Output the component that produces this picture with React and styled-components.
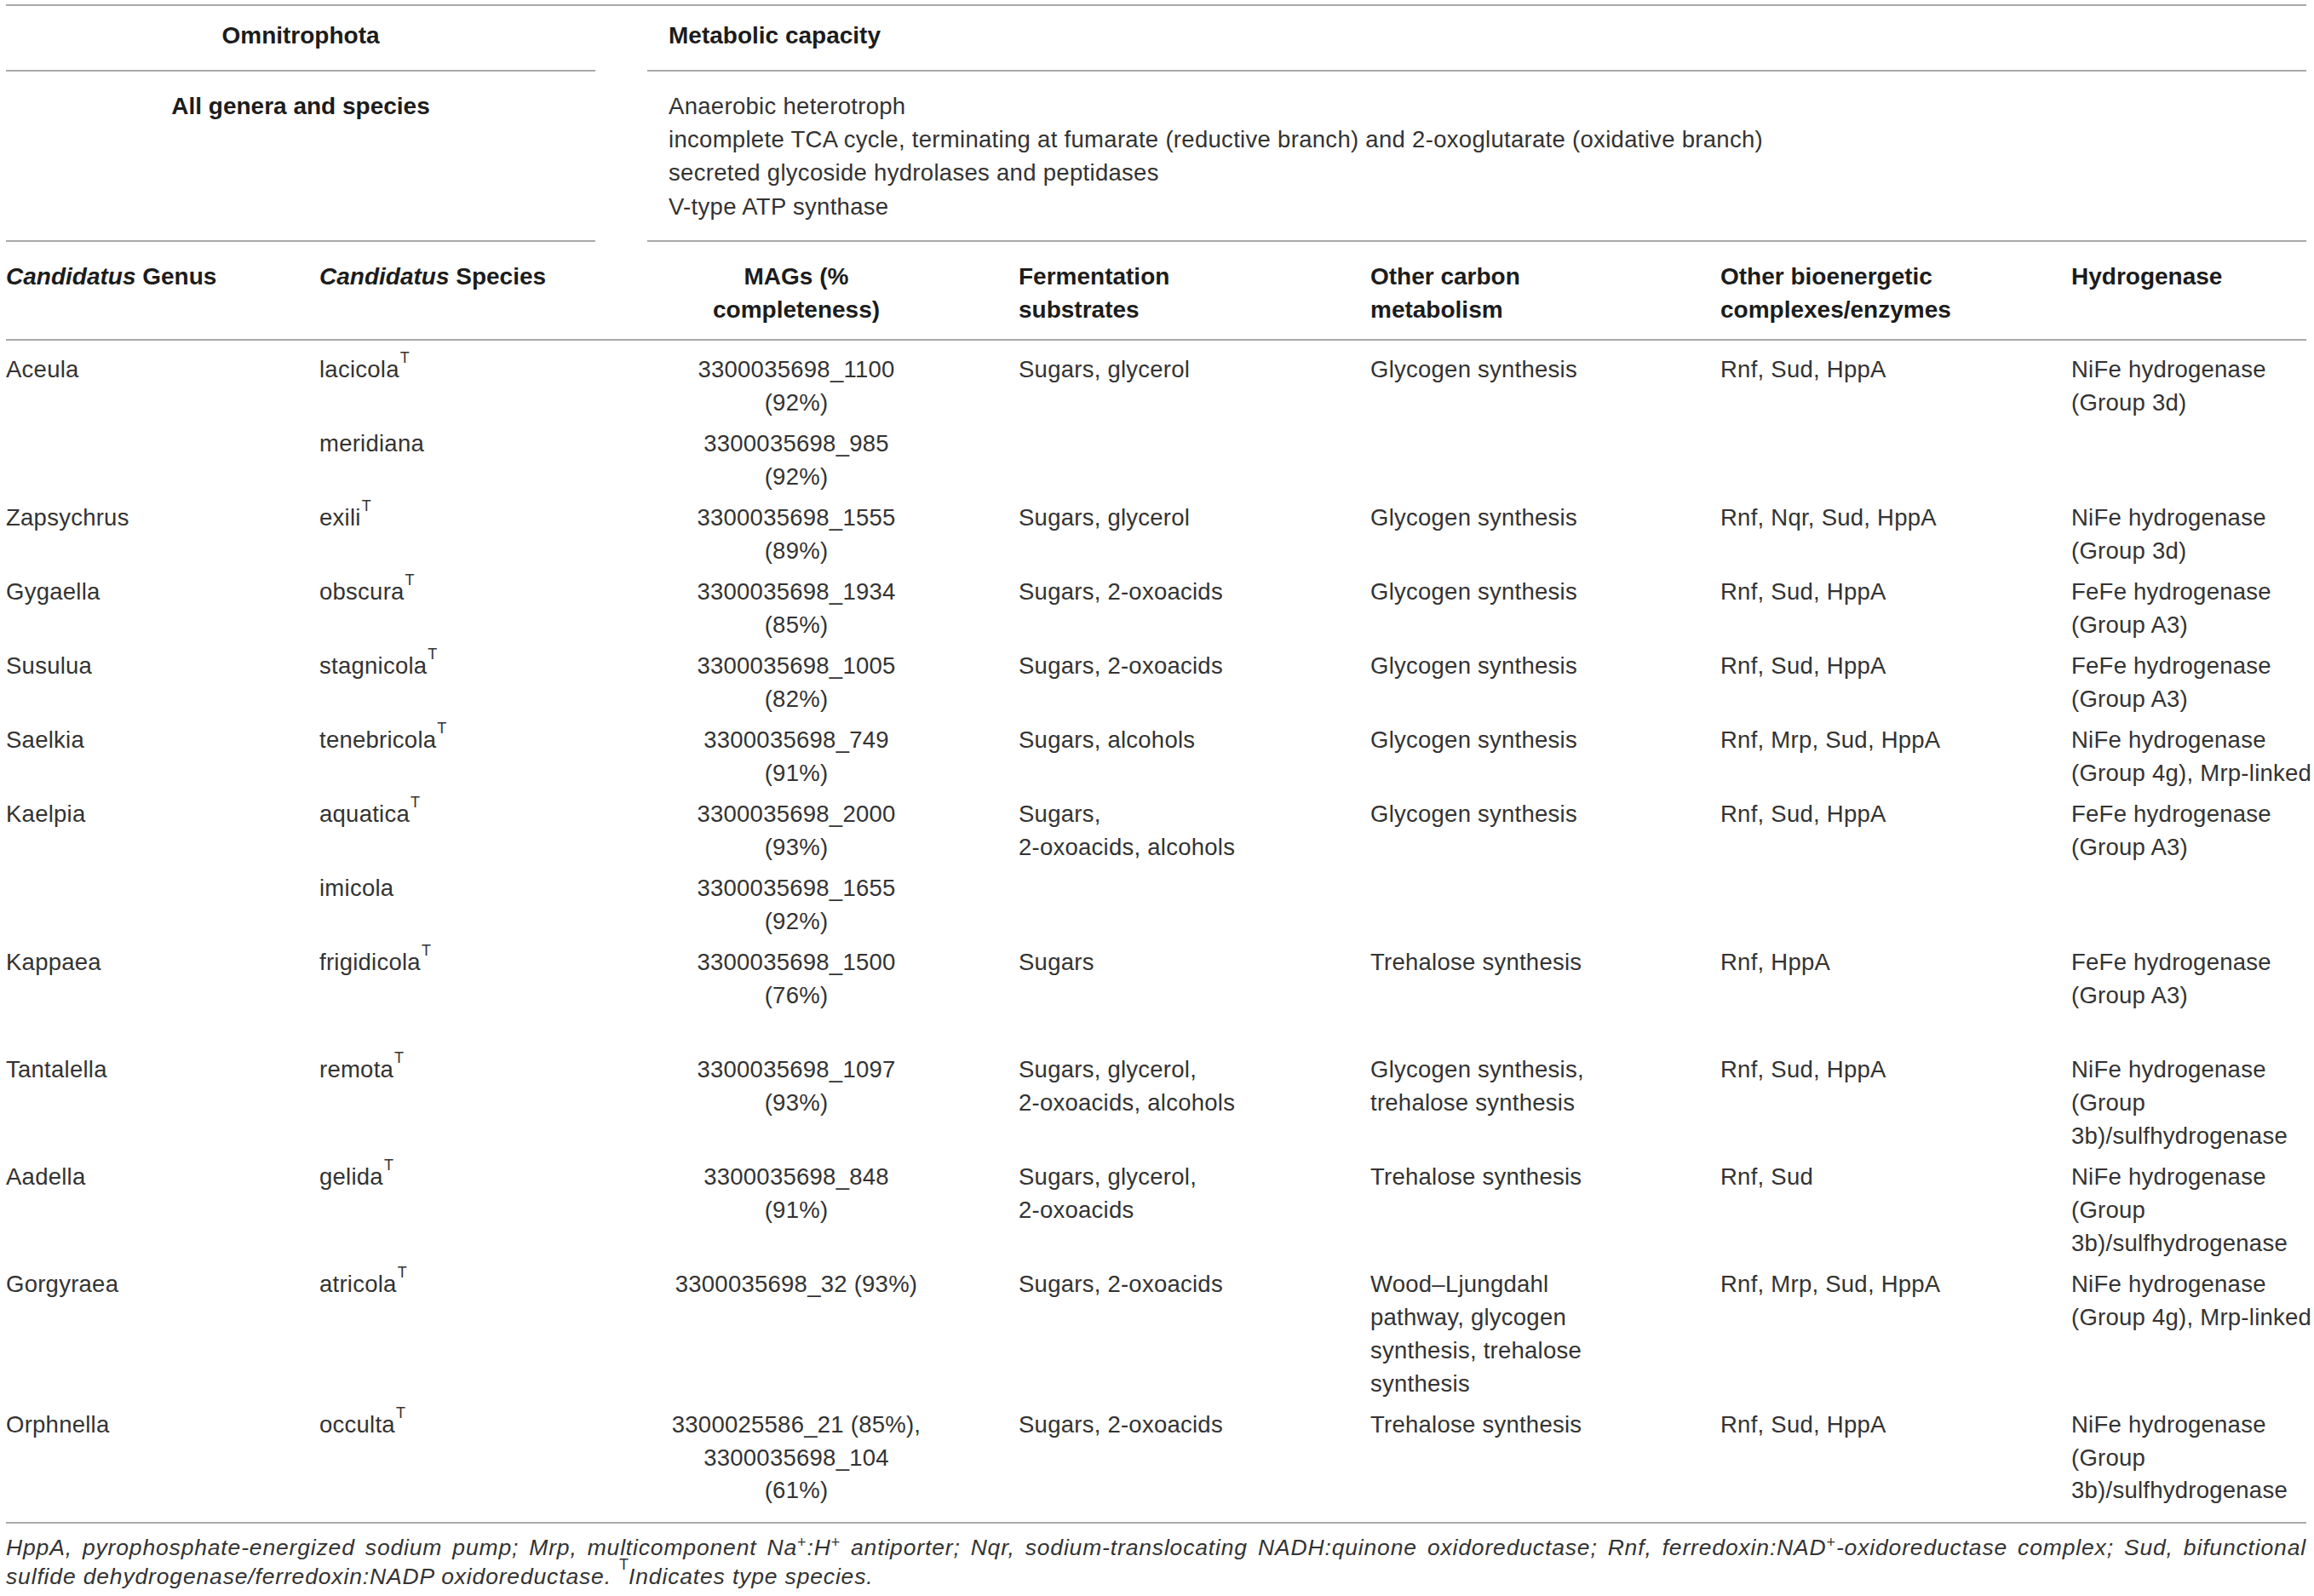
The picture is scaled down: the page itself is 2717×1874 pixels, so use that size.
import React from 'react';
import styled, { createGlobalStyle } from 'styled-components';

const Global = createGlobalStyle`
  html, body { margin: 0; padding: 0; background: #ffffff; }
  body {
    font-family: "Liberation Sans", Arial, Helvetica, sans-serif;
    color: #333333;
    -webkit-font-smoothing: antialiased;
  }
`;

const RULE = '2px solid #a9a9a9';
const COLS = '368px 385px 436px 413px 411px 412px 276px';

const Page = styled.div`
  width: 2701px;
  margin: 0 0 0 7px;
  padding-top: 5px;
  font-size: 27.5px;
  letter-spacing: 0.25px;
`;

const Table = styled.div`
  border-top: ${RULE};
`;

const GroupGrid = styled.div`
  display: grid;
  grid-template-columns: 692px 1948px;
  column-gap: 61px;
`;

const GroupCell = styled.div`
  border-bottom: ${RULE};
  padding: ${p => p.$pad};
  padding-left: ${p => (p.$center ? '0' : '25px')};
  text-align: ${p => (p.$center ? 'center' : 'left')};
  font-weight: ${p => (p.$bold ? 700 : 400)};
  font-size: ${p => (p.$bold ? '28px' : '27.5px')};
  letter-spacing: ${p => (p.$bold ? '0' : '0.3px')};
  color: ${p => (p.$bold ? '#1c1c1c' : '#333333')};
  line-height: ${p => p.$lh};
`;

const Line = styled.span`
  display: block;
  white-space: nowrap;
`;

const HeadGrid = styled.div`
  display: grid;
  grid-template-columns: ${COLS};
  border-bottom: ${RULE};
  padding: 21px 0 15px;
  font-weight: 700;
  font-size: 28px;
  letter-spacing: 0;
  line-height: 39px;
  color: #1c1c1c;
`;

const Body = styled.div`
  padding: 10px 0 12px;
  border-bottom: ${RULE};
`;

const Row = styled.div`
  display: grid;
  grid-template-columns: ${COLS};
  padding: 4.75px 0;
  line-height: 38.8px;
  min-height: ${p => (p.$lines ? `${p.$lines * 38.8}px` : 'auto')};
`;

const Cell = styled.div`
  text-align: ${p => (p.$center ? 'center' : 'left')};
  padding-right: ${p => (p.$center ? '86px' : '0')};
`;

const Sup = styled.sup`
  font-size: 18px;
  line-height: 0;
  vertical-align: 17px;
  font-style: normal;
  letter-spacing: 0;
  margin-left: 1px;
`;

const PlusSup = styled.sup`
  font-size: 18px;
  line-height: 0;
  vertical-align: 9px;
  font-style: normal;
`;

const Note = styled.div`
  margin-top: 11px;
  font-style: italic;
  font-size: 26.5px;
  letter-spacing: 0.84px;
  line-height: 34px;
  color: #333333;
`;

const NoteJustified = styled.span`
  display: block;
  text-align: justify;
  text-align-last: justify;
  white-space: nowrap;
`;

const NoteLine = styled.span`
  display: block;
  white-space: nowrap;
`;

const rows = [
  { g: 'Aceula', s: 'lacicola', t: true, m: ['3300035698_1100', '(92%)'], f: ['Sugars, glycerol'], c: ['Glycogen synthesis'], b: ['Rnf, Sud, HppA'], h: ['NiFe hydrogenase', '(Group 3d)'] },
  { g: '', s: 'meridiana', t: false, m: ['3300035698_985', '(92%)'], f: [], c: [], b: [], h: [] },
  { g: 'Zapsychrus', s: 'exili', t: true, m: ['3300035698_1555', '(89%)'], f: ['Sugars, glycerol'], c: ['Glycogen synthesis'], b: ['Rnf, Nqr, Sud, HppA'], h: ['NiFe hydrogenase', '(Group 3d)'] },
  { g: 'Gygaella', s: 'obscura', t: true, m: ['3300035698_1934', '(85%)'], f: ['Sugars, 2-oxoacids'], c: ['Glycogen synthesis'], b: ['Rnf, Sud, HppA'], h: ['FeFe hydrogenase', '(Group A3)'] },
  { g: 'Susulua', s: 'stagnicola', t: true, m: ['3300035698_1005', '(82%)'], f: ['Sugars, 2-oxoacids'], c: ['Glycogen synthesis'], b: ['Rnf, Sud, HppA'], h: ['FeFe hydrogenase', '(Group A3)'] },
  { g: 'Saelkia', s: 'tenebricola', t: true, m: ['3300035698_749', '(91%)'], f: ['Sugars, alcohols'], c: ['Glycogen synthesis'], b: ['Rnf, Mrp, Sud, HppA'], h: ['NiFe hydrogenase', '(Group 4g), Mrp-linked'] },
  { g: 'Kaelpia', s: 'aquatica', t: true, m: ['3300035698_2000', '(93%)'], f: ['Sugars,', '2-oxoacids, alcohols'], c: ['Glycogen synthesis'], b: ['Rnf, Sud, HppA'], h: ['FeFe hydrogenase', '(Group A3)'] },
  { g: '', s: 'imicola', t: false, m: ['3300035698_1655', '(92%)'], f: [], c: [], b: [], h: [] },
  { g: 'Kappaea', s: 'frigidicola', t: true, m: ['3300035698_1500', '(76%)'], f: ['Sugars'], c: ['Trehalose synthesis'], b: ['Rnf, HppA'], h: ['FeFe hydrogenase', '(Group A3)'], lines: 3 },
  { g: 'Tantalella', s: 'remota', t: true, m: ['3300035698_1097', '(93%)'], f: ['Sugars, glycerol,', '2-oxoacids, alcohols'], c: ['Glycogen synthesis,', 'trehalose synthesis'], b: ['Rnf, Sud, HppA'], h: ['NiFe hydrogenase', '(Group', '3b)/sulfhydrogenase'] },
  { g: 'Aadella', s: 'gelida', t: true, m: ['3300035698_848', '(91%)'], f: ['Sugars, glycerol,', '2-oxoacids'], c: ['Trehalose synthesis'], b: ['Rnf, Sud'], h: ['NiFe hydrogenase', '(Group', '3b)/sulfhydrogenase'] },
  { g: 'Gorgyraea', s: 'atricola', t: true, m: ['3300035698_32 (93%)'], f: ['Sugars, 2-oxoacids'], c: ['Wood\u2013Ljungdahl', 'pathway, glycogen', 'synthesis, trehalose', 'synthesis'], b: ['Rnf, Mrp, Sud, HppA'], h: ['NiFe hydrogenase', '(Group 4g), Mrp-linked'] },
  { g: 'Orphnella', s: 'occulta', t: true, m: ['3300025586_21 (85%),', '3300035698_104', '(61%)'], f: ['Sugars, 2-oxoacids'], c: ['Trehalose synthesis'], b: ['Rnf, Sud, HppA'], h: ['NiFe hydrogenase', '(Group', '3b)/sulfhydrogenase'] },
];

const Lines = ({ items }) => items.map((l, i) => <Line key={i}>{l}</Line>);

export default function App() {
  return (
    <>
      <Global />
      <Page>
        <Table>
          <GroupGrid>
            <GroupCell $center $bold $pad="16px 0 20px" $lh="38.8px">Omnitrophota</GroupCell>
            <GroupCell $bold $pad="16px 0 20px" $lh="38.8px">Metabolic capacity</GroupCell>
            <GroupCell $center $bold $pad="21px 0 20px" $lh="39.3px">All genera and species</GroupCell>
            <GroupCell $pad="21px 0 20px" $lh="39.3px">
              <Lines
                items={[
                  'Anaerobic heterotroph',
                  'incomplete TCA cycle, terminating at fumarate (reductive branch) and 2-oxoglutarate (oxidative branch)',
                  'secreted glycoside hydrolases and peptidases',
                  'V-type ATP synthase',
                ]}
              />
            </GroupCell>
          </GroupGrid>
          <HeadGrid>
            <Cell><i>Candidatus</i> Genus</Cell>
            <Cell><i>Candidatus</i> Species</Cell>
            <Cell $center><Lines items={['MAGs (%', 'completeness)']} /></Cell>
            <Cell><Lines items={['Fermentation', 'substrates']} /></Cell>
            <Cell><Lines items={['Other carbon', 'metabolism']} /></Cell>
            <Cell><Lines items={['Other bioenergetic', 'complexes/enzymes']} /></Cell>
            <Cell>Hydrogenase</Cell>
          </HeadGrid>
          <Body>
            {rows.map((r, i) => (
              <Row key={i} $lines={r.lines}>
                <Cell>{r.g}</Cell>
                <Cell>
                  {r.s}
                  {r.t && <Sup>T</Sup>}
                </Cell>
                <Cell $center><Lines items={r.m} /></Cell>
                <Cell><Lines items={r.f} /></Cell>
                <Cell><Lines items={r.c} /></Cell>
                <Cell><Lines items={r.b} /></Cell>
                <Cell><Lines items={r.h} /></Cell>
              </Row>
            ))}
          </Body>
        </Table>
        <Note>
          <NoteJustified>
            HppA, pyrophosphate-energized sodium pump; Mrp, multicomponent Na<PlusSup>+</PlusSup>:H<PlusSup>+</PlusSup> antiporter; Nqr, sodium-translocating NADH:quinone oxidoreductase; Rnf, ferredoxin:NAD<PlusSup>+</PlusSup>-oxidoreductase complex; Sud, bifunctional
          </NoteJustified>
          <NoteLine>
            sulfide dehydrogenase/ferredoxin:NADP oxidoreductase. <Sup>T</Sup>Indicates type species.
          </NoteLine>
        </Note>
      </Page>
    </>
  );
}
